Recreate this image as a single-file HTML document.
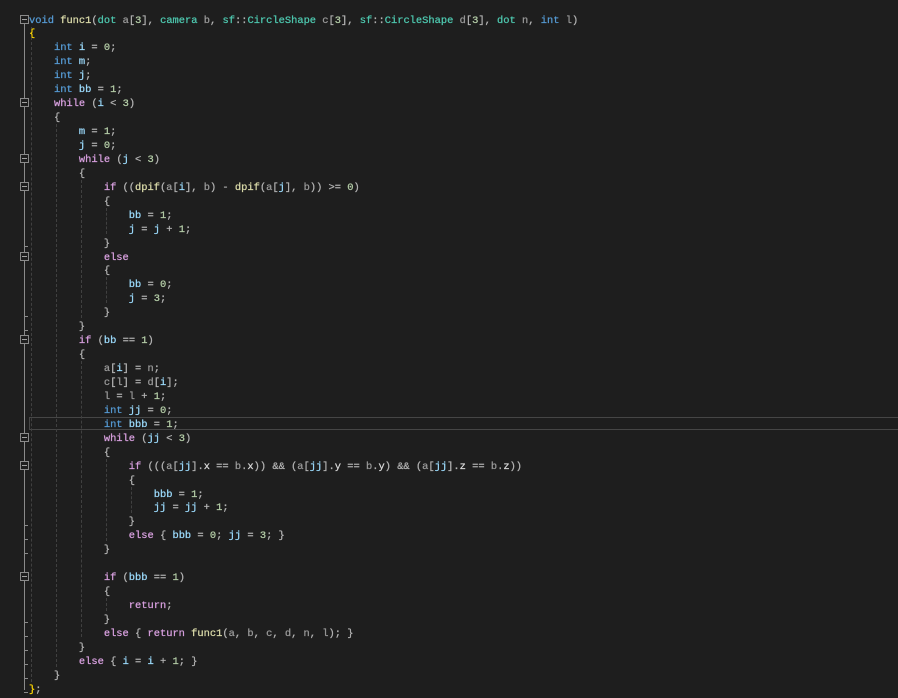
<!DOCTYPE html>
<html><head><meta charset="utf-8">
<style>
html,body{margin:0;padding:0;background:#1e1e1e;width:898px;height:698px;overflow:hidden;position:relative}
.l{position:absolute;left:29px;height:14px;line-height:14px;font-family:"Liberation Mono",monospace;font-size:10.4px;color:#b4b4b4;white-space:pre;-webkit-text-stroke:0.25px currentColor}
.k{color:#569cd6}.c{color:#d8a0df}.t{color:#4ec9b0}.v{color:#9cdcfe}.p{color:#9a9a9a}.n{color:#b5cea8}.f{color:#dcdcaa}.m{color:#dadada}.g{color:#ffd700}
.gd{position:absolute;width:0;border-left:1px dashed #404040}
.box{position:absolute;left:20px;width:7px;height:7px;border:1px solid #8a8a8a;background:#1e1e1e}
.box:after{content:"";position:absolute;left:1px;top:3px;width:5px;height:1px;background:#a0a0a0}
.tk{position:absolute;left:24px;width:4px;height:1px;background:#8a8a8a}
#cur{position:absolute;left:29px;width:868px;height:11px;border:1px solid #464646;top:417px}
</style></head><body>
<div style="position:absolute;left:24px;top:24px;width:1px;height:666px;background:#8a8a8a"></div>
<div id="cur"></div>
<div class="gd" style="left:31px;top:27px;height:655px"></div>
<div class="gd" style="left:56px;top:124px;height:543px"></div>
<div class="gd" style="left:81px;top:180px;height:138px"></div>
<div class="gd" style="left:81px;top:361px;height:276px"></div>
<div class="gd" style="left:106px;top:208px;height:26px"></div>
<div class="gd" style="left:106px;top:277px;height:26px"></div>
<div class="gd" style="left:106px;top:459px;height:82px"></div>
<div class="gd" style="left:106px;top:598px;height:13px"></div>
<div class="gd" style="left:131px;top:487px;height:26px"></div>
<div id="code"></div>
<script>
var L=[
'<span class="k">void</span> <span class="f">func1</span>(<span class="t">dot</span> <span class="p">a</span>[<span class="n">3</span>], <span class="t">camera</span> <span class="p">b</span>, <span class="t">sf</span>::<span class="t">CircleShape</span> <span class="p">c</span>[<span class="n">3</span>], <span class="t">sf</span>::<span class="t">CircleShape</span> <span class="p">d</span>[<span class="n">3</span>], <span class="t">dot</span> <span class="p">n</span>, <span class="k">int</span> <span class="p">l</span>)',
'<span class="g">{</span>',
'    <span class="k">int</span> <span class="v">i</span> = <span class="n">0</span>;',
'    <span class="k">int</span> <span class="v">m</span>;',
'    <span class="k">int</span> <span class="v">j</span>;',
'    <span class="k">int</span> <span class="v">bb</span> = <span class="n">1</span>;',
'    <span class="c">while</span> (<span class="v">i</span> &lt; <span class="n">3</span>)',
'    {',
'        <span class="v">m</span> = <span class="n">1</span>;',
'        <span class="v">j</span> = <span class="n">0</span>;',
'        <span class="c">while</span> (<span class="v">j</span> &lt; <span class="n">3</span>)',
'        {',
'            <span class="c">if</span> ((<span class="f">dpif</span>(<span class="p">a</span>[<span class="v">i</span>], <span class="p">b</span>) - <span class="f">dpif</span>(<span class="p">a</span>[<span class="v">j</span>], <span class="p">b</span>)) &gt;= <span class="n">0</span>)',
'            {',
'                <span class="v">bb</span> = <span class="n">1</span>;',
'                <span class="v">j</span> = <span class="v">j</span> + <span class="n">1</span>;',
'            }',
'            <span class="c">else</span>',
'            {',
'                <span class="v">bb</span> = <span class="n">0</span>;',
'                <span class="v">j</span> = <span class="n">3</span>;',
'            }',
'        }',
'        <span class="c">if</span> (<span class="v">bb</span> == <span class="n">1</span>)',
'        {',
'            <span class="p">a</span>[<span class="v">i</span>] = <span class="p">n</span>;',
'            <span class="p">c</span>[<span class="p">l</span>] = <span class="p">d</span>[<span class="v">i</span>];',
'            <span class="p">l</span> = <span class="p">l</span> + <span class="n">1</span>;',
'            <span class="k">int</span> <span class="v">jj</span> = <span class="n">0</span>;',
'            <span class="k">int</span> <span class="v">bbb</span> = <span class="n">1</span>;',
'            <span class="c">while</span> (<span class="v">jj</span> &lt; <span class="n">3</span>)',
'            {',
'                <span class="c">if</span> (((<span class="p">a</span>[<span class="v">jj</span>].<span class="m">x</span> == <span class="p">b</span>.<span class="m">x</span>)) &amp;&amp; (<span class="p">a</span>[<span class="v">jj</span>].<span class="m">y</span> == <span class="p">b</span>.<span class="m">y</span>) &amp;&amp; (<span class="p">a</span>[<span class="v">jj</span>].<span class="m">z</span> == <span class="p">b</span>.<span class="m">z</span>))',
'                {',
'                    <span class="v">bbb</span> = <span class="n">1</span>;',
'                    <span class="v">jj</span> = <span class="v">jj</span> + <span class="n">1</span>;',
'                }',
'                <span class="c">else</span> { <span class="v">bbb</span> = <span class="n">0</span>; <span class="v">jj</span> = <span class="n">3</span>; }',
'            }',
'',
'            <span class="c">if</span> (<span class="v">bbb</span> == <span class="n">1</span>)',
'            {',
'                <span class="c">return</span>;',
'            }',
'            <span class="c">else</span> { <span class="c">return</span> <span class="f">func1</span>(<span class="p">a</span>, <span class="p">b</span>, <span class="p">c</span>, <span class="p">d</span>, <span class="p">n</span>, <span class="p">l</span>); }',
'        }',
'        <span class="c">else</span> { <span class="v">i</span> = <span class="v">i</span> + <span class="n">1</span>; }',
'    }',
'<span class="g">}</span>;'
];
var h='',LH=13.94,T=13.5;
for(var i=0;i<L.length;i++){h+='<div class="l" style="top:'+(T+i*LH).toFixed(1)+'px">'+L[i]+'</div>';}
[0,6,10,12,17,23,30,32,40].forEach(function(i){h+='<div class="box" style="top:'+(12+i*LH+2.5).toFixed(1)+'px"></div>';});
[16,21,22,36,37,38,43,44,45,46,47,48].forEach(function(i){h+='<div class="tk" style="top:'+(12+i*LH+11).toFixed(1)+'px"></div>';});
document.getElementById('code').innerHTML=h;
</script>
</body></html>
